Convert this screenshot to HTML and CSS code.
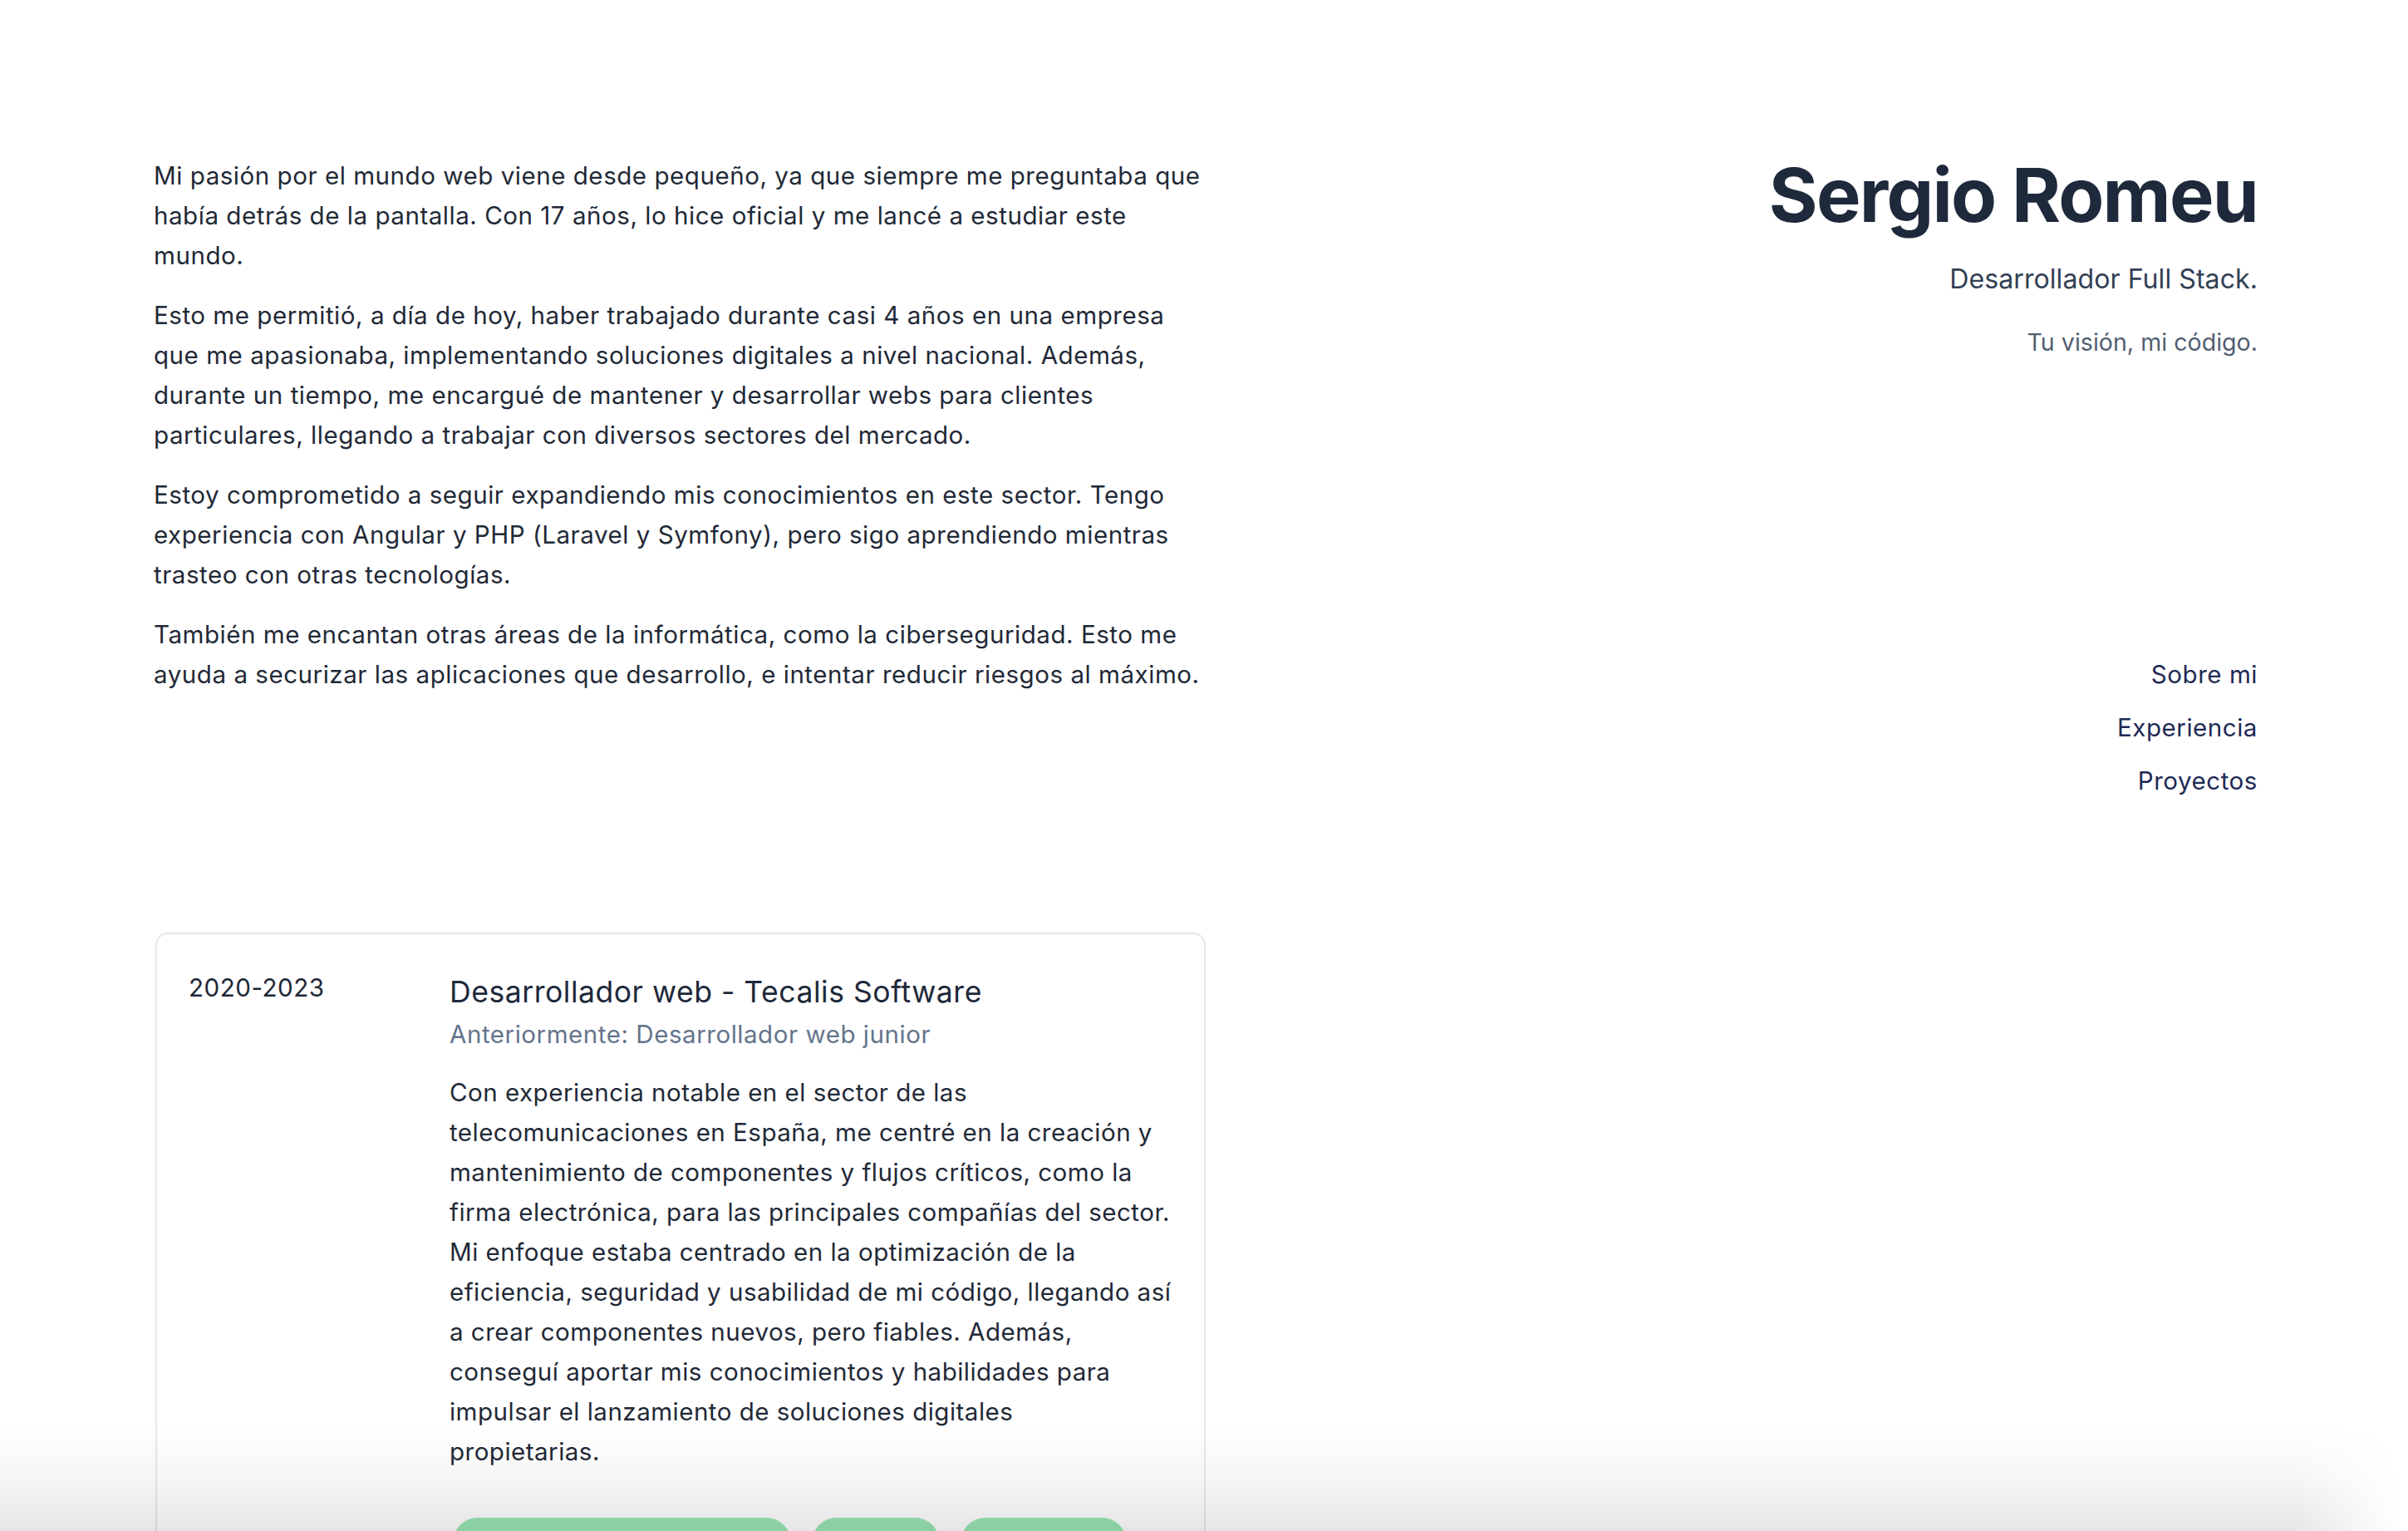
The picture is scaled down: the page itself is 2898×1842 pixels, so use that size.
FILE: index.html
```html
<!DOCTYPE html>
<html lang="es">
<head>
<meta charset="utf-8">
<title>Sergio Romeu</title>
<link rel="stylesheet" href="styles.css">
</head>
<body>
<div class="page">
  <main class="content">
    <section class="about">
      <p>Mi pasión por el mundo web viene desde pequeño, ya que siempre me preguntaba que había detrás de la pantalla. Con 17 años, lo hice oficial y me lancé a estudiar este mundo.</p>
      <p>Esto me permitió, a día de hoy, haber trabajado durante casi 4 años en una empresa que me apasionaba, implementando soluciones digitales a nivel nacional. Además, durante un tiempo, me encargué de mantener y desarrollar webs para clientes particulares, llegando a trabajar con diversos sectores del mercado.</p>
      <p>Estoy comprometido a seguir expandiendo mis conocimientos en este sector. Tengo experiencia con Angular y PHP (Laravel y Symfony), pero sigo aprendiendo mientras trasteo con otras tecnologías.</p>
      <p>También me encantan otras áreas de la informática, como la ciberseguridad. Esto me ayuda a securizar las aplicaciones que desarrollo, e intentar reducir riesgos al máximo.</p>
    </section>
    <section class="experience">
      <article class="card">
        <div class="date">2020-2023</div>
        <div class="job">
          <h3 class="job-title">Desarrollador web - Tecalis Software</h3>
          <div class="job-sub">Anteriormente: Desarrollador web junior</div>
          <p class="job-desc">Con experiencia notable en el sector de las telecomunicaciones en España, me centré en la creación y mantenimiento de componentes y flujos críticos, como la firma electrónica, para las principales compañías del sector. Mi enfoque estaba centrado en la optimización de la eficiencia, seguridad y usabilidad de mi código, llegando así a crear componentes nuevos, pero fiables. Además, conseguí aportar mis conocimientos y habilidades para impulsar el lanzamiento de soluciones digitales<br>propietarias.</p>
          <div class="tags">
            <span class="tag tag-a"></span>
            <span class="tag tag-b"></span>
            <span class="tag tag-c"></span>
          </div>
        </div>
      </article>
    </section>
  </main>
  <header class="side">
    <h1 class="name">Sergio Romeu</h1>
    <h2 class="role">Desarrollador Full Stack.</h2>
    <p class="tagline">Tu visión, mi código.</p>
    <nav class="nav">
      <a href="#about">Sobre mi</a>
      <a href="#experience">Experiencia</a>
      <a href="#projects">Proyectos</a>
    </nav>
  </header>
</div>
<div class="fade"></div>
</body>
</html>
```
FILE: styles.css
```css
* { box-sizing: border-box; }
html, body { margin: 0; padding: 0; background: #ffffff; }
body {
  font-family: Inter, "Noto Sans", "Liberation Sans", sans-serif;
  color: #1f2937;
  font-size: 29.6px;
  line-height: 48px;
  letter-spacing: 0.5px;
}
.page {
  display: grid;
  grid-template-columns: 1266px 1266px;
  padding: 187px 0 0 185px;
}
.about p { margin: 0 0 24px 0; }
.about p:last-child { margin-bottom: 0; }
.experience { margin-top: 287px; }
.card {
  display: grid;
  grid-template-columns: 314px 1fr;
  border: 2px solid #e7e7ea;
  border-radius: 15px;
  padding: 40px 28px 60px 38px;
  margin-left: 2px;
  margin-right: 0;
}
.date { color: #1f2937; }
.job-title {
  margin: 4px 0 0 0;
  font-weight: 400;
  font-size: 35.6px;
  line-height: 52px;
  letter-spacing: 0.5px;
  color: #1e293b;
}
.job-sub { color: #64748b; }
.job-desc { margin: 22px 0 0 0; letter-spacing: 0.45px; }
.tags { display: flex; gap: 25px; margin-top: 56px; padding-left: 4px; }
.tag { display: block; height: 60px; border-radius: 30px; background: #9ae6b4; }
.tag-a { width: 407px; }
.tag-b { width: 154px; }
.tag-c { width: 200px; }
.side {
  display: flex;
  flex-direction: column;
  align-items: flex-end;
  text-align: right;
}
.name {
  margin: 3px 0 0 0;
  font-size: 90px;
  line-height: 90px;
  font-weight: 700;
  letter-spacing: -0.02em;
  color: #1e293b;
}
.role {
  margin: 30px 0 0 0;
  font-size: 32.2px;
  line-height: 52px;
  font-weight: 400;
  letter-spacing: 0;
  color: #334155;
}
.tagline {
  margin: 26px 0 0 0;
  font-size: 28.6px;
  letter-spacing: 0;
  color: #525f73;
}
.nav {
  display: flex;
  flex-direction: column;
  align-items: flex-end;
  gap: 16px;
  margin-top: 351px;
}
.nav a { color: #1e2a55; text-decoration: none; }
.fade {
  position: fixed;
  left: 0;
  right: 0;
  bottom: 0;
  height: 130px;
  background: linear-gradient(to bottom, rgba(0,0,0,0) 0%, rgba(0,0,0,0.035) 50%, rgba(0,0,0,0.1) 100%);
  -webkit-mask-image: linear-gradient(to right, #000 0, #000 calc(100% - 140px), transparent calc(100% - 10px));
  mask-image: linear-gradient(to right, #000 0, #000 calc(100% - 140px), transparent calc(100% - 10px));
  pointer-events: none;
}
```
